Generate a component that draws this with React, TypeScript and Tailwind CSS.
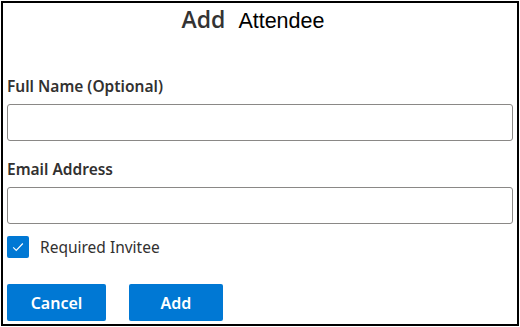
import { useState } from "react";

const uiFont = { fontFamily: '"Segoe UI", "Noto Sans", "Open Sans", sans-serif' };

export default function App() {
  const [name, setName] = useState("");
  const [email, setEmail] = useState("");
  const [required, setRequired] = useState(true);

  return (
    <div className="h-[327px] w-[520px] bg-white p-px">
      <div
        className="flex h-[325px] w-[518px] flex-col border-2 border-black bg-white px-[4px]"
        style={uiFont}
      >
        <h1 className="mt-[2px] flex items-baseline justify-center gap-[13px] pr-[14px]">
          <span
            className="text-[23px] font-semibold leading-7 text-[#333333]"
            style={{ fontFamily: '"Open Sans", "Noto Sans", sans-serif' }}
          >
            Add
          </span>
          <span
            className="text-[21.5px] leading-7 text-black"
            style={{ fontFamily: '"Liberation Sans", Arial, sans-serif' }}
          >
            Attendee
          </span>
        </h1>

        <label className="mt-[41px] flex flex-col">
          <span className="text-[15.5px] font-semibold leading-5 text-[#323130]">
            Full Name (Optional)
          </span>
          <input
            type="text"
            value={name}
            onChange={(e) => setName(e.target.value)}
            className="mt-[8px] h-[37px] w-full rounded-[3px] border border-[#8a8886] bg-white px-2 text-[15px] outline-none focus:border-[#0078d4]"
          />
        </label>

        <label className="mt-[18px] flex flex-col">
          <span className="text-[15.5px] font-semibold leading-5 text-[#323130]">
            Email Address
          </span>
          <input
            type="text"
            value={email}
            onChange={(e) => setEmail(e.target.value)}
            className="mt-[8px] h-[37px] w-full rounded-[3px] border border-[#8a8886] bg-white px-2 text-[15px] outline-none focus:border-[#0078d4]"
          />
        </label>

        <label className="mt-[12px] flex cursor-pointer items-center gap-[11px]">
          <button
            type="button"
            role="checkbox"
            aria-checked={required}
            onClick={() => setRequired(!required)}
            className={
              required
                ? "flex h-[22px] w-[22px] items-center justify-center rounded-[2px] bg-[#0078d4]"
                : "flex h-[22px] w-[22px] items-center justify-center rounded-[2px] border border-[#323130] bg-white"
            }
          >
            {required && (
              <svg className="h-[14px] w-[14px]" viewBox="0 0 16 16" fill="none">
                <path d="M2.5 8.5l3.5 3.5 7.5-8" stroke="white" strokeWidth="1.3" />
              </svg>
            )}
          </button>
          <span className="text-[15.5px] leading-5 text-[#323130]">Required Invitee</span>
        </label>

        <div className="mt-[26px] flex gap-[23px]">
          <button
            type="button"
            className="h-[37px] w-[99px] rounded-[2px] bg-[#0078d4] text-[16px] font-semibold text-white hover:bg-[#106ebe]"
          >
            Cancel
          </button>
          <button
            type="button"
            className="h-[37px] w-[94px] rounded-[2px] bg-[#0078d4] text-[16px] font-semibold text-white hover:bg-[#106ebe]"
          >
            Add
          </button>
        </div>
      </div>
    </div>
  );
}
